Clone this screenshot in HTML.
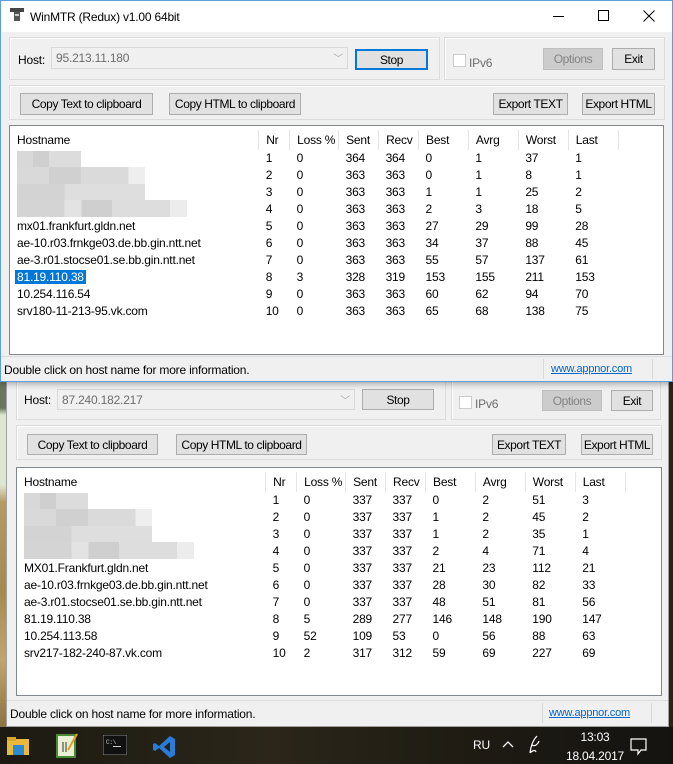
<!DOCTYPE html>
<html><head><meta charset="utf-8">
<style>
*{box-sizing:border-box;margin:0;padding:0}
body{width:673px;height:764px;overflow:hidden;position:relative;font-family:"Liberation Sans",sans-serif;font-size:12px;color:#000;background:#2a2418;letter-spacing:-0.2px}
.bgstrip{position:absolute;left:0;top:380px;width:8px;height:350px;background:linear-gradient(#6b7560 0,#6b7560 8%,#dfe6cf 10%,#dfe6cf 30%,#b59a62 35%,#a58a50 60%,#c2a56c 80%,#8a7040 100%)}
.win{position:absolute;background:#f0f0f0}
.abs{position:absolute;white-space:nowrap}
.grp{position:absolute;border:1px solid #dcdcdc;box-shadow:inset 1px 1px 0 #fff}
.btn{position:absolute;background:#e1e1e1;border:1px solid #adadad;text-align:center;font-size:12px;display:flex;align-items:center;justify-content:center;white-space:nowrap;letter-spacing:-0.4px}
.combo{position:absolute;background:#f0f0f0;border:1px solid #d9d9d9;color:#6d6d6d;padding-left:4px;display:flex;align-items:center}
.combo span.arr{position:absolute;right:4px;top:2px;color:#aaa;font-size:10px}
.chk{position:absolute;width:13px;height:13px;border:1px solid #ccc;background:#fff}
.list{position:absolute;background:#fff;border:1px solid #828790}
table{border-collapse:collapse;table-layout:fixed;position:absolute;left:0;top:4px}
td{height:17px;padding:0 0 0 7px;white-space:nowrap;overflow:hidden;font-size:12px;line-height:17px}
tr.h td{height:20px;line-height:19px;border-right:1px solid #e5e5e5}
tr.h td:last-child{border-right:none}
.sel{background:#0078d7;color:#fff;padding:0 2px;margin-left:-2px}
.status{position:absolute;left:0;right:0;height:25px;background:#f0f0f0;border-top:1px solid #dadada}
.status .t{position:absolute;left:3px;top:6px;font-size:12px}
.status .sep{position:absolute;top:2px;width:1px;height:20px;background:#d8d8d8}
.status a{position:absolute;top:6px;color:#0066cc;text-decoration:underline;font-size:11px}
.blur{position:absolute;height:16px;background:#d6d6d6}
</style></head><body>
<div class="bgstrip"></div>

<!-- window 2 (behind) -->
<div class="win" style="left:6px;top:340px;width:663px;height:387px;border-left:1px solid #a0a0a0;border-right:1px solid #a0a0a0;border-bottom:1px solid #a0a0a0">
  <div class="grp" style="left:9px;top:37px;width:430px;height:43px"></div>
  <div class="abs" style="left:17px;top:53px">Host:</div>
  <div class="combo" style="left:50px;top:49px;width:298px;height:21px">87.240.182.217<span class="arr">﹀</span></div>
  <div class="btn" style="left:355px;top:49px;width:72px;height:21px">Stop</div>
  <div class="grp" style="left:444px;top:37px;width:210px;height:43px"></div>
  <div class="chk" style="left:452px;top:56px"></div>
  <div class="abs" style="left:468px;top:57px;color:#6d6d6d">IPv6</div>
  <div class="btn" style="left:535px;top:50px;width:60px;height:21px;background:#ccc;border-color:#bfbfbf;color:#838383">Options</div>
  <div class="btn" style="left:604px;top:50px;width:42px;height:21px">Exit</div>
  <div class="grp" style="left:9px;top:85px;width:646px;height:35px"></div>
  <div class="btn" style="left:20px;top:94px;width:131px;height:21px">Copy Text to clipboard</div>
  <div class="btn" style="left:169px;top:94px;width:131px;height:21px">Copy HTML to clipboard</div>
  <div class="btn" style="left:485px;top:94px;width:74px;height:21px">Export TEXT</div>
  <div class="btn" style="left:574px;top:94px;width:72px;height:21px">Export HTML</div>
  <div class="list" style="left:9px;top:127px;width:646px;height:229px">
    <div class="blur" style="left:7px;top:25px;width:64px;background:linear-gradient(90deg,#d8d8d8 0 25%,#cfcfcf 25% 50%,#dcdcdc 50%)"></div>
    <div class="blur" style="left:7px;top:41px;width:128px;height:17px;background:linear-gradient(90deg,#d9d9d9 0 25%,#d0d0d0 25% 50%,#dadada 50% 87%,#eeeeee 87%)"></div>
    <div class="blur" style="left:7px;top:58px;width:128px;height:17px;background:linear-gradient(90deg,#d3d3d3 0 37%,#dedede 37%)"></div>
    <div class="blur" style="left:7px;top:74px;width:170px;height:17px;background:linear-gradient(90deg,#d4d4d4 0 28%,#e3e3e3 28% 38%,#cfcfcf 38% 56%,#dddddd 56% 90%,#ececec 90%)"></div>
    <table>
      <colgroup><col style="width:249px"><col style="width:31px"><col style="width:49px"><col style="width:40px"><col style="width:40px"><col style="width:50px"><col style="width:50px"><col style="width:50px"><col style="width:50px"><col style="width:36px"></colgroup>
      <tr class="h"><td>Hostname</td><td>Nr</td><td>Loss %</td><td>Sent</td><td>Recv</td><td>Best</td><td>Avrg</td><td>Worst</td><td>Last</td><td></td></tr>
      <tr><td></td><td>1</td><td>0</td><td>337</td><td>337</td><td>0</td><td>2</td><td>51</td><td>3</td><td></td></tr>
      <tr><td></td><td>2</td><td>0</td><td>337</td><td>337</td><td>1</td><td>2</td><td>45</td><td>2</td><td></td></tr>
      <tr><td></td><td>3</td><td>0</td><td>337</td><td>337</td><td>1</td><td>2</td><td>35</td><td>1</td><td></td></tr>
      <tr><td></td><td>4</td><td>0</td><td>337</td><td>337</td><td>2</td><td>4</td><td>71</td><td>4</td><td></td></tr>
      <tr><td>MX01.Frankfurt.gldn.net</td><td>5</td><td>0</td><td>337</td><td>337</td><td>21</td><td>23</td><td>112</td><td>21</td><td></td></tr>
      <tr><td>ae-10.r03.frnkge03.de.bb.gin.ntt.net</td><td>6</td><td>0</td><td>337</td><td>337</td><td>28</td><td>30</td><td>82</td><td>33</td><td></td></tr>
      <tr><td>ae-3.r01.stocse01.se.bb.gin.ntt.net</td><td>7</td><td>0</td><td>337</td><td>337</td><td>48</td><td>51</td><td>81</td><td>56</td><td></td></tr>
      <tr><td>81.19.110.38</td><td>8</td><td>5</td><td>289</td><td>277</td><td>146</td><td>148</td><td>190</td><td>147</td><td></td></tr>
      <tr><td>10.254.113.58</td><td>9</td><td>52</td><td>109</td><td>53</td><td>0</td><td>56</td><td>88</td><td>63</td><td></td></tr>
      <tr><td>srv217-182-240-87.vk.com</td><td>10</td><td>2</td><td>317</td><td>312</td><td>59</td><td>69</td><td>227</td><td>69</td><td></td></tr>
    </table>
  </div>
  <div class="status" style="top:360px">
    <div class="t">Double click on host name for more information.</div>
    <div class="sep" style="left:535px"></div>
    <a style="left:542px">www.appnor.com</a>
    <div class="sep" style="left:644px"></div>
  </div>
</div>

<!-- window 1 (front) -->
<div class="win" style="left:0;top:0;width:673px;height:382px;border:1px solid #5a9ee0;box-shadow:0 2px 6px rgba(0,0,0,.3)">
  <div class="abs" style="left:0;top:0;width:671px;height:31px;background:#fff"></div>
  <svg class="abs" style="left:8px;top:6px" width="16" height="16" viewBox="0 0 16 16"><rect x="1" y="1" width="14" height="4" fill="#444"/><rect x="5" y="5" width="6" height="9" fill="#555"/><rect x="6" y="7" width="4" height="2" fill="#ccc"/></svg>
  <div class="abs" style="left:29px;top:9px;font-size:12px">WinMTR (Redux) v1.00 64bit</div>
  <div class="abs" style="left:552px;top:15px;width:11px;height:1px;background:#000"></div>
  <div class="abs" style="left:597px;top:9px;width:11px;height:11px;border:1px solid #000"></div>
  <svg class="abs" style="left:642px;top:9px" width="12" height="12"><path d="M0.5 0.5L11.5 11.5M11.5 0.5L0.5 11.5" stroke="#000" stroke-width="1"/></svg>

  <div class="grp" style="left:8px;top:36px;width:431px;height:43px"></div>
  <div class="abs" style="left:17px;top:52px">Host:</div>
  <div class="combo" style="left:50px;top:46px;width:297px;height:22px">95.213.11.180<span class="arr">﹀</span></div>
  <div class="btn" style="left:354px;top:48px;width:73px;height:21px;border:2px solid #0078d7">Stop</div>
  <div class="grp" style="left:443px;top:36px;width:221px;height:43px"></div>
  <div class="chk" style="left:452px;top:53px"></div>
  <div class="abs" style="left:468px;top:55px;color:#6d6d6d">IPv6</div>
  <div class="btn" style="left:542px;top:47px;width:60px;height:22px;background:#ccc;border-color:#bfbfbf;color:#838383">Options</div>
  <div class="btn" style="left:611px;top:47px;width:43px;height:22px">Exit</div>
  <div class="grp" style="left:8px;top:84px;width:656px;height:35px"></div>
  <div class="btn" style="left:19px;top:92px;width:133px;height:22px">Copy Text to clipboard</div>
  <div class="btn" style="left:168px;top:92px;width:132px;height:22px">Copy HTML to clipboard</div>
  <div class="btn" style="left:492px;top:92px;width:75px;height:22px">Export TEXT</div>
  <div class="btn" style="left:581px;top:92px;width:73px;height:22px">Export HTML</div>
  <div class="list" style="left:8px;top:124px;width:655px;height:230px">
    <div class="blur" style="left:7px;top:25px;width:64px;background:linear-gradient(90deg,#d8d8d8 0 25%,#cfcfcf 25% 50%,#dcdcdc 50%)"></div>
    <div class="blur" style="left:7px;top:41px;width:128px;height:17px;background:linear-gradient(90deg,#d9d9d9 0 25%,#d0d0d0 25% 50%,#dadada 50% 87%,#eeeeee 87%)"></div>
    <div class="blur" style="left:7px;top:58px;width:128px;height:17px;background:linear-gradient(90deg,#d3d3d3 0 37%,#dedede 37%)"></div>
    <div class="blur" style="left:7px;top:74px;width:170px;height:17px;background:linear-gradient(90deg,#d4d4d4 0 28%,#e3e3e3 28% 38%,#cfcfcf 38% 56%,#dddddd 56% 90%,#ececec 90%)"></div>
    <table>
      <colgroup><col style="width:249px"><col style="width:31px"><col style="width:49px"><col style="width:40px"><col style="width:40px"><col style="width:50px"><col style="width:50px"><col style="width:50px"><col style="width:50px"><col style="width:45px"></colgroup>
      <tr class="h"><td>Hostname</td><td>Nr</td><td>Loss %</td><td>Sent</td><td>Recv</td><td>Best</td><td>Avrg</td><td>Worst</td><td>Last</td><td></td></tr>
      <tr><td></td><td>1</td><td>0</td><td>364</td><td>364</td><td>0</td><td>1</td><td>37</td><td>1</td><td></td></tr>
      <tr><td></td><td>2</td><td>0</td><td>363</td><td>363</td><td>0</td><td>1</td><td>8</td><td>1</td><td></td></tr>
      <tr><td></td><td>3</td><td>0</td><td>363</td><td>363</td><td>1</td><td>1</td><td>25</td><td>2</td><td></td></tr>
      <tr><td></td><td>4</td><td>0</td><td>363</td><td>363</td><td>2</td><td>3</td><td>18</td><td>5</td><td></td></tr>
      <tr><td>mx01.frankfurt.gldn.net</td><td>5</td><td>0</td><td>363</td><td>363</td><td>27</td><td>29</td><td>99</td><td>28</td><td></td></tr>
      <tr><td>ae-10.r03.frnkge03.de.bb.gin.ntt.net</td><td>6</td><td>0</td><td>363</td><td>363</td><td>34</td><td>37</td><td>88</td><td>45</td><td></td></tr>
      <tr><td>ae-3.r01.stocse01.se.bb.gin.ntt.net</td><td>7</td><td>0</td><td>363</td><td>363</td><td>55</td><td>57</td><td>137</td><td>61</td><td></td></tr>
      <tr><td><span class="sel">81.19.110.38</span></td><td>8</td><td>3</td><td>328</td><td>319</td><td>153</td><td>155</td><td>211</td><td>153</td><td></td></tr>
      <tr><td>10.254.116.54</td><td>9</td><td>0</td><td>363</td><td>363</td><td>60</td><td>62</td><td>94</td><td>70</td><td></td></tr>
      <tr><td>srv180-11-213-95.vk.com</td><td>10</td><td>0</td><td>363</td><td>363</td><td>65</td><td>68</td><td>138</td><td>75</td><td></td></tr>
    </table>
  </div>
  <div class="status" style="top:355px">
    <div class="t">Double click on host name for more information.</div>
    <div class="sep" style="left:542px"></div>
    <a style="left:550px">www.appnor.com</a>
    <div class="sep" style="left:651px"></div>
  </div>
</div>

<!-- taskbar -->
<div class="abs" style="left:0;top:727px;width:673px;height:37px;background:linear-gradient(90deg,#1c1a12,#2b2619 40%,#1e1b13 70%,#151310)"></div>
<svg class="abs" style="left:7px;top:735px" width="24" height="22"><rect x="0" y="4" width="22" height="16" fill="#e8b93c"/><rect x="0" y="2" width="9" height="4" fill="#d9a52b"/><rect x="6" y="10" width="11" height="10" fill="#2a8ad4"/></svg>
<svg class="abs" style="left:55px;top:732px" width="24" height="26"><rect x="2" y="3" width="18" height="22" fill="#eaf0d6"/><rect x="2" y="3" width="18" height="22" fill="none" stroke="#4c8a3a" stroke-width="2"/><path d="M8 10v10M11 10v10" stroke="#333"/><path d="M13 18L22 2" stroke="#e0a020" stroke-width="2"/></svg>
<svg class="abs" style="left:103px;top:735px" width="24" height="20"><rect x="0" y="0" width="24" height="20" fill="#111" stroke="#888"/><text x="3" y="9" fill="#ccc" font-size="6" font-family="Liberation Mono">C:\</text><rect x="10" y="11" width="8" height="1" fill="#ccc"/></svg>
<svg class="abs" style="left:153px;top:735px" width="24" height="24"><path d="M17 1L22 4V20L17 23L6 13L2 16L0 15V9L2 8L6 11ZM17 7L11 12L17 17Z" fill="#2a7ad6"/></svg>
<div class="abs" style="left:473px;top:738px;color:#fff;font-size:12px">RU</div>
<svg class="abs" style="left:502px;top:740px" width="12" height="8"><path d="M1 7L6 2L11 7" stroke="#fff" fill="none" stroke-width="1.3"/></svg>
<svg class="abs" style="left:527px;top:735px" width="14" height="20"><path d="M10 1C6 5 4 10 3 18M5 10C8 12 11 9 12 6M3 18C5 16 8 14 9 17" stroke="#fff" fill="none" stroke-width="1.2"/></svg>
<div class="abs" style="left:573px;top:730px;width:44px;text-align:center;color:#fff;font-size:12px">13:03</div>
<div class="abs" style="left:558px;top:749px;width:74px;text-align:center;color:#fff;font-size:12px">18.04.2017</div>
<svg class="abs" style="left:630px;top:738px" width="18" height="18"><path d="M1 1H16V12H11L8 16V12H1Z" stroke="#fff" fill="none" stroke-width="1.2"/></svg>
</body></html>
